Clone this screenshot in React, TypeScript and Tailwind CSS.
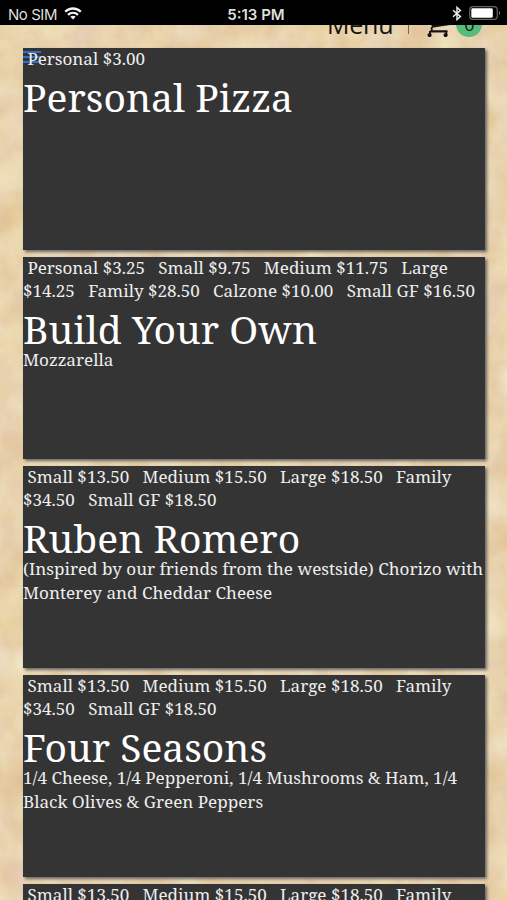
import React from "react";

interface IPizza {
  name: string;
  prices: string[];
  description: string[];
}

const pizzas: IPizza[] = [
  { name: "Personal Pizza", prices: [" Personal $3.00"], description: [] },
  {
    name: "Build Your Own",
    prices: [
      " Personal $3.25   Small $9.75   Medium $11.75   Large",
      "$14.25   Family $28.50   Calzone $10.00   Small GF $16.50",
    ],
    description: ["Mozzarella"],
  },
  {
    name: "Ruben Romero",
    prices: [
      " Small $13.50   Medium $15.50   Large $18.50   Family",
      "$34.50   Small GF $18.50",
    ],
    description: [
      "(Inspired by our friends from the westside) Chorizo with",
      "Monterey and Cheddar Cheese",
    ],
  },
  {
    name: "Four Seasons",
    prices: [
      " Small $13.50   Medium $15.50   Large $18.50   Family",
      "$34.50   Small GF $18.50",
    ],
    description: [
      "1/4 Cheese, 1/4 Pepperoni, 1/4 Mushrooms & Ham, 1/4",
      "Black Olives & Green Peppers",
    ],
  },
  {
    name: "",
    prices: [" Small $13.50   Medium $15.50   Large $18.50   Family"],
    description: [],
  },
];

const Parchment = () => (
  <svg className="absolute inset-0 -z-10" width="507" height="900">
    <filter id="paper" x="0" y="0" width="100%" height="100%" colorInterpolationFilters="sRGB">
      <feTurbulence type="fractalNoise" baseFrequency="0.03 0.025" numOctaves="5" seed="8" />
      <feColorMatrix
        values="0.08 0 0 0 0.87
                0.18 0.03 0 0 0.72
                0.2 0.06 0.12 0 0.49
                0 0 0 0 1"
      />
    </filter>
    <rect width="507" height="900" filter="url(#paper)" />
  </svg>
);

const StatusBar = () => (
  <div className="relative z-10 grid h-[25px] grid-cols-3 items-center bg-black pt-[3px] font-['Inter',sans-serif] text-[15px] leading-none text-[#dedede]">
    <div className="flex items-center gap-[7px] pl-[8px]">
      <span className="tracking-[-0.45px]">No SIM</span>
      <svg className="-mt-[2px]" width="18" height="13" viewBox="0 0 18 13" fill="none" stroke="#f4f4f4" strokeWidth="2.3">
        <path d="M1.2 4.7C5.6.4 12.4.4 16.8 4.7" />
        <path d="M4 7.8C6.9 5.1 11.1 5.1 14 7.8" />
        <path d="M9 12.4 6.3 9.8C7.8 8.5 10.2 8.5 11.7 9.8Z" fill="#f4f4f4" stroke="none" />
      </svg>
    </div>
    <div className="pl-[5px] text-center font-semibold">5:13 PM</div>
    <div className="-mt-[2px] flex items-center justify-end gap-[7px] pr-[6px]">
      <svg width="10" height="15" viewBox="0 0 10 15" fill="none" stroke="#e8e8e8" strokeWidth="1.5">
        <path d="M1 4.2 8.4 10.6 5 13.6V1.4L8.4 4.4 1 10.8" />
      </svg>
      <svg width="32" height="14" viewBox="0 0 32 14">
        <rect x=".7" y=".7" width="27.6" height="12.6" rx="3.4" fill="none" stroke="#666" strokeWidth="1.2" />
        <rect x="2.3" y="2.3" width="21.5" height="9.4" rx="1.4" fill="#fff" />
        <path d="M30 4.8c1.5.7 1.5 3.7 0 4.4Z" fill="#777" />
      </svg>
    </div>
  </div>
);

const CartIcon = () => (
  <svg className="mb-[11px] ml-[18px]" width="24" height="22" viewBox="0 0 24 22" fill="none" stroke="#171310" strokeWidth="1.8">
    <path d="M23 10 5 12.8 2.5 0H24Z" fill="#171310" stroke="none" />
    <path d="M4.7 12v4.4h15.6" />
    <path d="M2.9 16.4h17.4" />
    <path d="M2.9 16v4M19.3 16v4" />
    <circle cx="2.6" cy="20" r="1.2" fill="#171310" />
    <circle cx="18.6" cy="20" r="1.2" fill="#171310" />
  </svg>
);

const Header = () => (
  <div className="flex h-[23px] items-end overflow-hidden pl-[327px] text-[#171310]">
    <span className="mb-[10px] font-['Open_Sans',sans-serif] text-[25px] font-medium leading-[28px] tracking-[-0.2px]">
      Menu
    </span>
    <span className="mb-[14px] ml-[15px] h-[20px] w-px bg-[#77654f]" />
    <CartIcon />
    <span className="mb-[11px] ml-[5px] flex size-[26px] shrink-0 items-center justify-center rounded-full bg-[#57bb7b] font-['Open_Sans',sans-serif] text-[18px]">
      0
    </span>
  </div>
);

const PizzaCard = ({ pizza }: { pizza: IPizza }) => (
  <div className="h-[202px] shrink-0 whitespace-pre bg-[#343434] text-[17.05px] leading-[23.2px] text-[#eeeeee] shadow-[2px_2px_3px_#666]">
    <div className="relative z-10 -mt-px">
      {pizza.prices.map((line) => (
        <div key={line}>{line}</div>
      ))}
    </div>
    <h2 className="h-[46px] text-[39px] leading-[53px] text-white">{pizza.name}</h2>
    <div className="text-[17.1px]">
      {pizza.description.map((line) => (
        <div key={line}>{line}</div>
      ))}
    </div>
  </div>
);

const App = () => {
  return (
    <div className="relative isolate h-[900px] w-[507px] overflow-hidden bg-[#ead2aa]">
      <Parchment />
      <StatusBar />
      <Header />
      <div className="relative ml-[23px] flex w-[462px] flex-col gap-[7px] font-['Noto_Serif','DejaVu_Serif_Condensed','DejaVu_Serif',serif]">
        {pizzas.map((pizza, index) => (
          <PizzaCard key={index} pizza={pizza} />
        ))}
        {/* menu toggle stays behind the first price */}
        <div className="absolute left-0 top-[3px] flex w-[18px] flex-col gap-[3px]">
          <span className="h-[2px] bg-[#2f70c8]" />
          <span className="h-[2px] bg-[#2f70c8]" />
          <span className="h-[2px] bg-[#2f70c8]" />
        </div>
      </div>
    </div>
  );
};

export default App;
